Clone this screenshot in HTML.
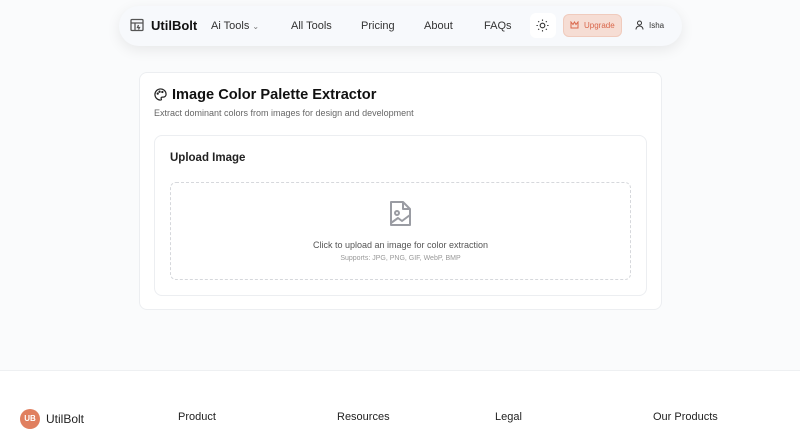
<!DOCTYPE html>
<html><head><style>
*{margin:0;padding:0;box-sizing:border-box}
body{width:800px;height:432px;overflow:hidden;background:#fafbfc;font-family:"Liberation Sans",sans-serif;position:relative;color:#111}
.a{position:absolute}
.nav{left:119px;top:6px;width:563px;height:40px;border-radius:20px;background:#f7f9fc;box-shadow:0 4px 14px rgba(0,0,0,.08)}
.nl{font-size:11px;color:#333;top:19px}
.card{left:139px;top:72px;width:523px;height:238px;background:#fff;border:1px solid #eceef1;border-radius:8px}
.inner{left:154px;top:135px;width:493px;height:161px;border:1px solid #eceef1;border-radius:8px;background:#fff}
.dash{left:170px;top:182px;width:461px;height:98px;border:1.5px dashed #d6d8dc;border-radius:6px}
.foot{left:0;top:370px;width:800px;height:62px;background:#fff;border-top:1px solid #eef0f2}
.fh{top:411px;font-size:11px;color:#222}
</style></head><body>
<div class="a nav"></div>
<svg class="a" style="left:130px;top:18px" width="14" height="14" viewBox="0 0 14 14" fill="none" stroke="#555" stroke-width="1.3"><rect x="1" y="1.5" width="12" height="11" rx="1"/><path d="M1 5h12M5 5v7.5M8.5 7l-1 2.5h2l-1 2"/></svg>
<div class="a" style="left:151px;top:18px;font-size:13px;font-weight:bold">UtilBolt</div>
<div class="a nl" style="left:211px;top:20px">Ai Tools <span style="font-size:8px;color:#777">&#8964;</span></div>
<div class="a nl" style="left:291px;top:20px">All Tools</div>
<div class="a nl" style="left:361px;top:20px">Pricing</div>
<div class="a nl" style="left:424px;top:20px">About</div>
<div class="a nl" style="left:484px;top:20px">FAQs</div>
<div class="a" style="left:530px;top:13px;width:26px;height:25px;background:#fff;border-radius:6px"></div>
<svg class="a" style="left:536px;top:19px" width="13" height="13" viewBox="0 0 14 14" fill="none" stroke="#333" stroke-width="1.2"><circle cx="7" cy="7" r="2.5"/><path d="M7 0.5v1.5M7 12v1.5M0.5 7H2M12 7h1.5M2.4 2.4l1 1M10.6 10.6l1 1M2.4 11.6l1-1M10.6 3.4l1-1"/></svg>
<div class="a" style="left:563px;top:14px;width:59px;height:23px;background:#f6ddd4;border:1px solid #f0cbbd;border-radius:6px;font-size:8px;color:#d9664a;line-height:21px;padding-left:20px">Upgrade</div>
<svg class="a" style="left:570px;top:21px" width="9" height="8" viewBox="0 0 9 8" fill="none" stroke="#d9664a" stroke-width="1"><path d="M1 1l2 2.5L4.5 1 6 3.5 8 1v6H1z"/></svg>
<svg class="a" style="left:635px;top:20px" width="9" height="10" viewBox="0 0 9 10" fill="none" stroke="#333" stroke-width="1"><circle cx="4.5" cy="3" r="2"/><path d="M1 9.5c0-2 1.5-3.5 3.5-3.5S8 7.5 8 9.5"/></svg>
<div class="a" style="left:649px;top:21px;font-size:8px;color:#333">Isha</div>

<div class="a card"></div>
<svg class="a" style="left:154px;top:88px" width="13" height="13" viewBox="0 0 14 14" fill="none" stroke="#222" stroke-width="1.3"><path d="M7 1a6 6 0 1 0 0 12c1 0 1.3-.8.8-1.5-.5-.8 0-1.7 1-1.7H10a3 3 0 0 0 3-3C13 3.5 10.3 1 7 1z"/><circle cx="4" cy="6" r=".6" fill="#222"/><circle cx="6" cy="4" r=".6" fill="#222"/><circle cx="9" cy="4.3" r=".6" fill="#222"/></svg>
<div class="a" style="left:172px;top:87px;font-size:14.6px;font-weight:bold;color:#111">Image Color Palette Extractor</div>
<div class="a" style="left:154px;top:108px;font-size:9px;color:#666">Extract dominant colors from images for design and development</div>
<div class="a inner"></div>
<div class="a" style="left:170px;top:152px;font-size:11.5px;font-weight:bold;color:#222">Upload Image</div>
<div class="a dash"></div>
<svg class="a" style="left:389px;top:200px" width="23" height="27" viewBox="0 0 23 27" fill="none" stroke="#9a9ca3" stroke-width="2" stroke-linejoin="round"><path d="M2 2h12l7 7v16H2z"/><path d="M14 2v7h7"/><circle cx="8" cy="13" r="2"/><path d="M2 23l7-5 4 3 8-6"/></svg>
<div class="a" style="left:170px;width:461px;text-align:center;top:240px;font-size:9px;color:#555">Click to upload an image for color extraction</div>
<div class="a" style="left:170px;width:461px;text-align:center;top:255px;font-size:7px;color:#999">Supports: JPG, PNG, GIF, WebP, BMP</div>

<div class="a foot"></div>
<div class="a" style="left:20px;top:409px;width:20px;height:20px;border-radius:50%;background:#e07f5f;color:#fff;font-size:8px;font-weight:bold;text-align:center;line-height:20px">UB</div>
<div class="a" style="left:46px;top:412px;font-size:12px;color:#222">UtilBolt</div>
<div class="a fh" style="left:178px">Product</div>
<div class="a fh" style="left:337px">Resources</div>
<div class="a fh" style="left:495px">Legal</div>
<div class="a fh" style="left:653px">Our Products</div>
</body></html>
